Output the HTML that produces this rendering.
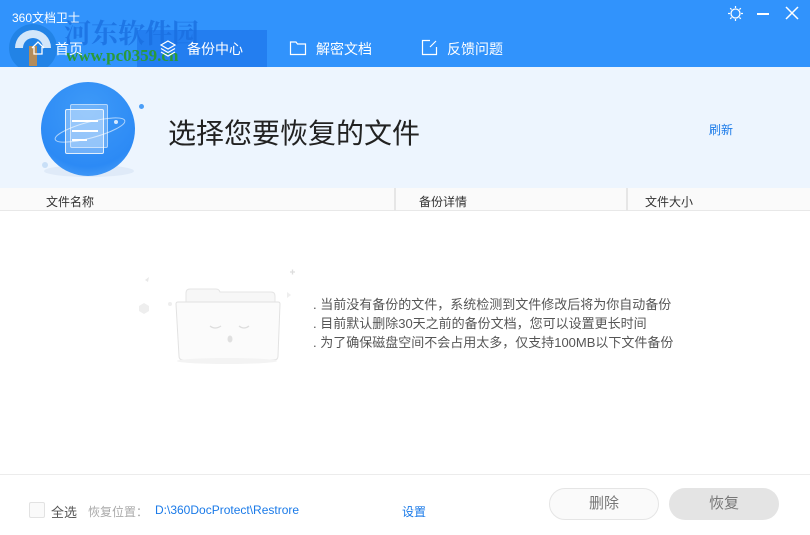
<!DOCTYPE html>
<html><head><meta charset="utf-8"><style>
*{margin:0;padding:0;box-sizing:border-box}
body{width:810px;height:535px;overflow:hidden;background:#fff;font-family:"Liberation Sans","Noto Sans CJK SC",sans-serif;position:relative;font-size:12px;color:#333}
.abs{position:absolute}
#top{left:0;top:0;width:810px;height:67px;background:#3193fc}
#act{left:137px;top:30px;width:130px;height:37px;background:#237ef0}
.tab{color:#fff;font-size:14px;top:39px}
#ban{left:0;top:67px;width:810px;height:121px;background:#edf5fe}
#th{left:0;top:188px;width:810px;height:23px;background:#fafafa;border-bottom:1px solid #e8e8e8}
.thc{top:193px;font-size:12px;color:#333}
.sep{top:188px;width:2px;height:23px;background:#e6e6e6}
.msg{left:313px;font-size:13px;color:#555}
</style></head><body>
<div id="top" class="abs"></div>
<div id="act" class="abs"></div>
<div class="abs" style="left:12px;top:9px;color:#fff;font-size:12px">360文档卫士</div>
<div class="abs" style="left:64px;top:12px;color:#1a6fe0;font-size:27px;font-weight:bold;font-family:'Noto Serif CJK SC',serif;opacity:.8">河东软件园</div>
<div class="abs" style="left:66px;top:46px;color:#2a9a3a;font-size:17px;font-weight:bold;font-family:'Liberation Serif',serif">www.pc0359.cn</div>
<svg class="abs" style="left:5px;top:18px" width="56" height="50"><circle cx="28" cy="30" r="24" fill="#1f7fe0" opacity=".8"/><path d="M10 30 a18 18 0 0 1 36 0 h-8 a10 10 0 0 0-20 0z" fill="#fff" opacity=".8"/><rect x="24" y="28" width="8" height="20" fill="#b48c5a"/></svg>
<svg class="abs" style="left:30px;top:40px" width="16" height="16"><path d="M2 8 L8 2 L14 8 M4 7 V14 H12 V7" stroke="#fff" fill="none" stroke-width="1.3"/></svg>
<div class="abs tab" style="left:55px">首页</div>
<svg class="abs" style="left:159px;top:39px" width="18" height="18"><path d="M9 2 L16 6 L9 10 L2 6Z M2 9.5 L9 13.5 L16 9.5 M2 13 L9 17 L16 13" stroke="#fff" fill="none" stroke-width="1.2"/></svg>
<div class="abs tab" style="left:187px">备份中心</div>
<svg class="abs" style="left:289px;top:40px" width="18" height="16"><path d="M1.5 2 H7 L8.5 4 H16.5 V14.5 H1.5Z" stroke="#fff" fill="none" stroke-width="1.2"/></svg>
<div class="abs tab" style="left:316px">解密文档</div>
<svg class="abs" style="left:421px;top:39px" width="17" height="17"><path d="M9 1.5 H1.5 V15.5 H15.5 V8 M15 2 L9 8" stroke="#fff" fill="none" stroke-width="1.2"/></svg>
<div class="abs tab" style="left:447px">反馈问题</div>
<svg class="abs" style="left:727px;top:5px" width="17" height="17"><circle cx="8.5" cy="8.5" r="4.5" stroke="#fff" fill="none" stroke-width="1.3"/><path d="M8.5 1V3M8.5 14V16M1 8.5H3M14 8.5H16M3.2 3.2L4.6 4.6M12.4 12.4L13.8 13.8M3.2 13.8L4.6 12.4M12.4 4.6L13.8 3.2" stroke="#fff" stroke-width="1.2"/></svg>
<div class="abs" style="left:757px;top:13px;width:12px;height:1.5px;background:#fff"></div>
<svg class="abs" style="left:785px;top:6px" width="14" height="14"><path d="M1 1L13 13M13 1L1 13" stroke="#fff" stroke-width="1.5"/></svg>
<div id="ban" class="abs"></div>
<div class="abs" style="left:44px;top:165px;width:90px;height:12px;border-radius:50%;background:#d8e6f5;opacity:.7"></div>
<div class="abs" style="left:41px;top:82px;width:94px;height:94px;border-radius:50%;background:radial-gradient(circle at 50% 30%,#3e9af8,#2c8af5 70%,#5aa9f7)"></div>
<div class="abs" style="left:70px;top:104px;width:38px;height:44px;border:1px solid rgba(255,255,255,.5);background:rgba(255,255,255,.25);border-radius:2px"></div>
<div class="abs" style="left:65px;top:109px;width:39px;height:45px;border:1px solid rgba(255,255,255,.8);background:rgba(255,255,255,.3);border-radius:2px"></div>
<div class="abs" style="left:72px;top:120px;width:26px;height:2px;background:#fff"></div>
<div class="abs" style="left:72px;top:130px;width:26px;height:2px;background:#fff"></div>
<div class="abs" style="left:72px;top:139px;width:15px;height:2px;background:#fff"></div>
<svg class="abs" style="left:50px;top:110px" width="80" height="40"><ellipse cx="40" cy="20" rx="36" ry="8" transform="rotate(-15 40 20)" stroke="rgba(255,255,255,.6)" fill="none"/><circle cx="66" cy="12" r="2" fill="#fff" opacity=".8"/></svg>
<div class="abs" style="left:139px;top:104px;width:5px;height:5px;border-radius:50%;background:#4b9ef7"></div>
<div class="abs" style="left:42px;top:162px;width:6px;height:6px;border-radius:50%;background:#c8dff7"></div>
<div class="abs" style="left:168px;top:112px;font-size:28px;color:#222">选择您要恢复的文件</div>
<div class="abs" style="left:709px;top:121px;font-size:12px;color:#1a7ae8">刷新</div>
<div id="th" class="abs"></div>
<div class="abs sep" style="left:394px"></div>
<div class="abs sep" style="left:626px"></div>
<div class="abs thc" style="left:46px">文件名称</div>
<div class="abs thc" style="left:419px">备份详情</div>
<div class="abs thc" style="left:645px">文件大小</div>
<svg class="abs" style="left:135px;top:260px" width="160" height="105"><path d="M155 12h5M157.5 9.5v5" stroke="#ddd" stroke-width="1.3"/><polygon points="10,20 14,17 13,22" fill="#e8e8e8"/><circle cx="35" cy="44" r="2" fill="#eee"/><polygon points="9,43 14,46 14,51 9,54 4,51 4,46" fill="#eee"/><polygon points="152,32 156,35 152,38" fill="#eee"/><path d="M51 60 V33 q0-4 4-4 h26 q3 0 4 3 h51 q4 0 4 4 V60" fill="#f7f7f7" stroke="#e4e4e4"/><path d="M41 44 q0-2 2-2 h100 q2 0 2 2 L143 96 q0 4-4 4 H48 q-4 0-4-4Z" fill="#fbfbfb" stroke="#e2e2e2"/><ellipse cx="92" cy="101" rx="50" ry="3" fill="#f3f3f3"/><path d="M75 66 q5 4 11 0 M104 66 q5 4 10 0" stroke="#ddd" stroke-width="1.3" fill="none"/><ellipse cx="95" cy="79" rx="2.5" ry="3.5" fill="#e0e0e0"/></svg>
<div class="abs msg" style="top:294px">. 当前没有备份的文件，系统检测到文件修改后将为你自动备份</div>
<div class="abs msg" style="top:313px">. 目前默认删除30天之前的备份文档，您可以设置更长时间</div>
<div class="abs msg" style="top:332px">. 为了确保磁盘空间不会占用太多，仅支持100MB以下文件备份</div>
<div class="abs" style="left:0;top:474px;width:810px;height:1px;background:#ececec"></div>
<div class="abs" style="left:29px;top:502px;width:16px;height:16px;border:1px solid #e2e2e2;border-radius:2px;background:#fafafa"></div>
<div class="abs" style="left:51px;top:502px;font-size:13px;color:#555">全选</div>
<div class="abs" style="left:88px;top:503px;font-size:12px;color:#aaa">恢复位置：</div>
<div class="abs" style="left:155px;top:503px;font-size:12px;color:#1a7ae8">D:\360DocProtect\Restrore</div>
<div class="abs" style="left:402px;top:503px;font-size:12px;color:#1a7ae8">设置</div>
<div class="abs" style="left:549px;top:488px;width:110px;height:32px;border:1px solid #e5e5e5;border-radius:16px;background:#fafafa;color:#777;font-size:15px;text-align:center;line-height:30px">删除</div>
<div class="abs" style="left:669px;top:488px;width:110px;height:32px;border-radius:16px;background:#e4e4e4;color:#777;font-size:15px;text-align:center;line-height:32px">恢复</div>
</body></html>
